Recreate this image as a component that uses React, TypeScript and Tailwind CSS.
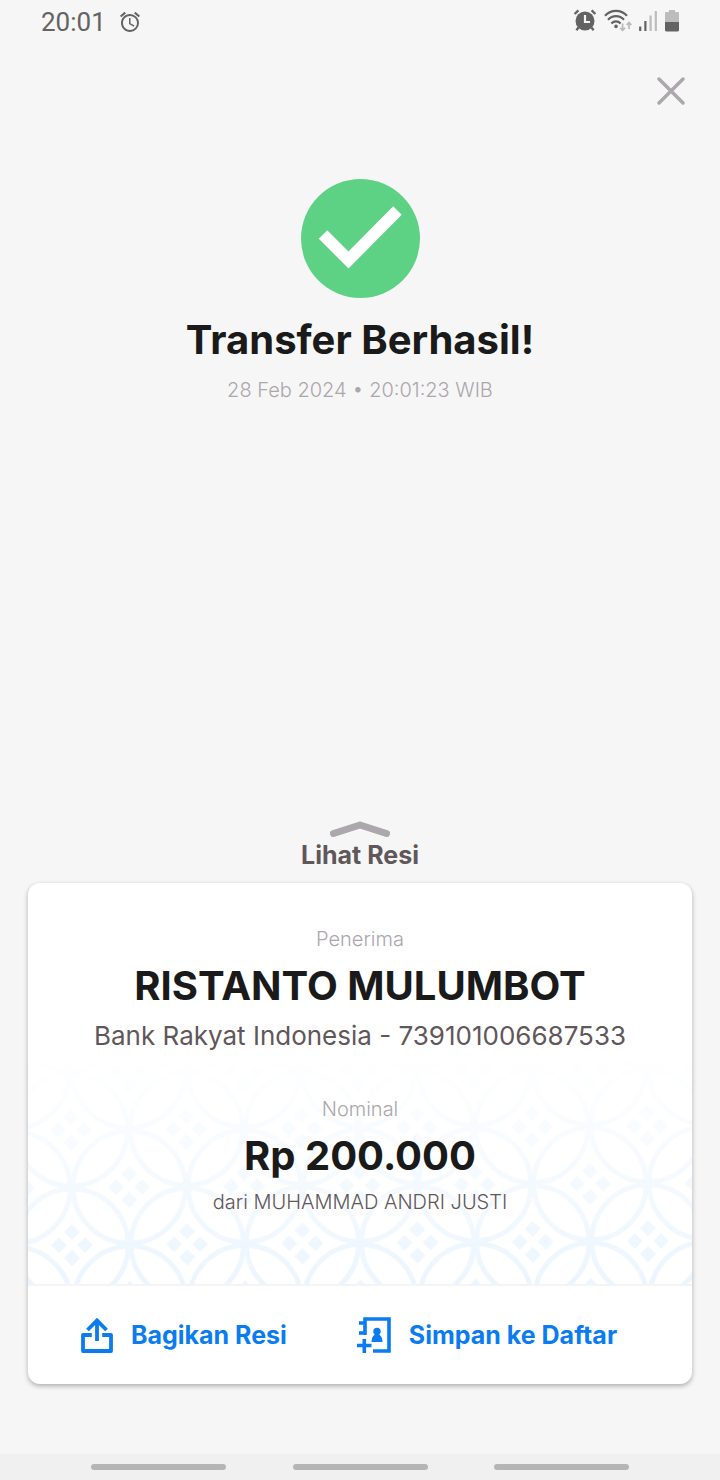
import { MdAccessAlarm } from "react-icons/md";

function AlarmFilledIcon() {
  return (
    <svg viewBox="0 0 24 24" className="size-6" aria-hidden="true">
      <circle cx="12" cy="13" r="9.5" fill="#636363" />
      <path d="M5.5 19.5L3.4 22.2M18.5 19.5L20.6 22.2" stroke="#636363" strokeWidth="2.4" />
      <path d="M1.6 6L5.4 2.4M22.4 6L18.6 2.4" stroke="#636363" strokeWidth="2.4" />
      <path d="M12 7V14H17" fill="none" stroke="#f6f6f6" strokeWidth="2.2" />
    </svg>
  );
}

function WifiIcon() {
  return (
    <svg viewBox="0 0 28 24" className="h-6 w-7" aria-hidden="true">
      <g fill="none" stroke="#636363" strokeWidth="2.2">
        <path d="M1 7.8C7 1.2 17 1.2 23 7.8" />
        <path d="M4 11.8C8.5 7 15.5 7 20 11.8" />
        <path d="M7.4 15.4C10 12.6 14 12.6 16.6 15.4" />
      </g>
      <circle cx="12" cy="18.4" r="1.8" fill="#636363" />
      <g fill="none" stroke="#b9b9b9" strokeWidth="1.7">
        <path d="M18.6 15.5V22M16.2 19.8L18.6 22.3L21 19.8" />
        <path d="M25 21V14.5M22.6 17L25 14.5L27.4 17" />
      </g>
    </svg>
  );
}

function SignalIcon() {
  return (
    <svg viewBox="0 0 20 24" className="h-6 w-5" aria-hidden="true">
      <path d="M2.2 18.5V23M7.4 13V23" stroke="#636363" strokeWidth="2.2" />
      <path d="M12.6 7.5V23M17.8 3V23" stroke="#bcbcbc" strokeWidth="2.2" />
    </svg>
  );
}

function BatteryIcon() {
  return (
    <svg viewBox="0 0 14 24" className="h-6 w-3.5" aria-hidden="true">
      <path d="M4 2H10V4H13Q14 4 14 5V14H0V5Q0 4 1 4H4Z" fill="#bcbcbc" />
      <path d="M0 14H14V22Q14 23.5 12.5 23.5H1.5Q0 23.5 0 22Z" fill="#636363" />
    </svg>
  );
}

function CloseIcon() {
  return (
    <svg viewBox="0 0 28 28" className="size-7" aria-hidden="true">
      <path d="M2 2L26 26M26 2L2 26" stroke="#aca6ad" strokeWidth="3.4" strokeLinecap="round" />
    </svg>
  );
}

function SuccessIcon() {
  return (
    <svg viewBox="0 0 120 120" className="size-30" aria-hidden="true">
      <circle cx="60.5" cy="59.5" r="59.5" fill="#5dd284" />
      <path d="M23 55.5L48.5 81L97.5 31.5" fill="none" stroke="#fff" strokeWidth="12" />
    </svg>
  );
}

function ShareIcon() {
  return (
    <svg viewBox="0 0 32 36" className="h-9 w-8" fill="none" stroke="currentColor" strokeWidth="3.8" aria-hidden="true">
      <path d="M10.8 18H2V34H30V18H21.2" strokeLinejoin="round" />
      <path d="M16 4V24M6.5 13L16 3.5L25.5 13" />
    </svg>
  );
}

function ContactAddIcon() {
  return (
    <svg viewBox="0 0 34 36" className="h-9 w-8.5" fill="none" stroke="currentColor" strokeWidth="3.6" aria-hidden="true">
      <path d="M16 34H32V2H8V18" />
      <path d="M2 6H8M2 16H8" />
      <path d="M0 28.5H14.5M7.3 22V36" />
      <circle cx="20" cy="14.5" r="3.7" fill="currentColor" stroke="none" />
      <path d="M14.5 25C14.5 20 17 17 20 17S25.5 20 25.5 25Z" fill="currentColor" stroke="none" />
    </svg>
  );
}

// Kawung ornament behind the lower half of the receipt, fading out upwards
function KawungPattern() {
  return (
    <svg className="absolute inset-x-0 bottom-0 h-58 w-full" aria-hidden="true">
      <defs>
        <linearGradient id="fade" x1="0" y1="0" x2="0" y2="1">
          <stop offset="0" stopColor="#fff" stopOpacity="0" />
          <stop offset="1" stopColor="#fff" />
        </linearGradient>
        <mask id="fade-mask">
          <rect width="100%" height="100%" fill="url(#fade)" />
        </mask>
        <g id="squares" fill="#ecf5fe">
          <path d="M0 -21L8 -13L0 -5L-8 -13Z" />
          <path d="M0 5L8 13L0 21L-8 13Z" />
          <path d="M-13 -8L-5 0L-13 8L-21 0Z" />
          <path d="M13 -8L21 0L13 8L5 0Z" />
        </g>
        <pattern
          id="kawung"
          width="115.2"
          height="115.2"
          patternUnits="userSpaceOnUse"
          patternTransform="translate(44 193) rotate(-0.4)"
        >
          <g fill="none" stroke="#ecf5fe" strokeWidth="5">
            <circle cx="0" cy="0" r="56.2" />
            <circle cx="115.2" cy="0" r="56.2" />
            <circle cx="0" cy="115.2" r="56.2" />
            <circle cx="115.2" cy="115.2" r="56.2" />
            <circle cx="57.6" cy="57.6" r="56.2" />
          </g>
          <use href="#squares" />
          <use href="#squares" x="115.2" />
          <use href="#squares" y="115.2" />
          <use href="#squares" x="115.2" y="115.2" />
          <use href="#squares" x="57.6" y="57.6" />
        </pattern>
      </defs>
      <rect width="100%" height="100%" fill="url(#kawung)" mask="url(#fade-mask)" />
    </svg>
  );
}

function StatusBar() {
  return (
    <header className="flex h-11 items-center justify-between px-[41px] font-['Roboto',sans-serif] text-[#636363]">
      <div className="flex items-center gap-3">
        <span className="text-[26px] leading-8">20:01</span>
        <MdAccessAlarm className="size-6" aria-hidden="true" />
      </div>
      <div className="flex items-center gap-[7px] pb-1">
        <AlarmFilledIcon />
        <div className="flex items-center gap-1.5">
          <WifiIcon />
          <SignalIcon />
        </div>
        <BatteryIcon />
      </div>
    </header>
  );
}

export default function App() {
  return (
    <div className="flex min-h-screen flex-col bg-[#f6f6f6] font-['Inter',sans-serif] text-[#1a1a1a]">
      <StatusBar />

      <div className="flex justify-end px-[27px] pt-[25px]">
        <button type="button" aria-label="Tutup" className="p-2">
          <CloseIcon />
        </button>
      </div>

      <main className="flex grow flex-col px-7">
        <section className="flex flex-col items-center pt-[66px] text-center">
          <SuccessIcon />
          <h1 className="mt-[17px] text-[40px] leading-12 font-bold">Transfer Berhasil!</h1>
          <p className="mt-3.5 text-[20px] leading-6 font-light text-[#aca6ad]">28 Feb 2024 • 20:01:23 WIB</p>
        </section>

        <button type="button" className="mt-auto flex flex-col items-center gap-0.5 self-center pb-3 text-[#5f5759]">
          <svg viewBox="0 0 60 16" className="h-4 w-15" aria-hidden="true">
            <path
              d="M3.5 12.5L30 4L56.5 12.5"
              fill="none"
              stroke="#aca6ad"
              strokeWidth="7"
              strokeLinecap="round"
              strokeLinejoin="round"
            />
          </svg>
          <span className="text-[25px] leading-8 font-bold">Lihat Resi</span>
        </button>

        <article className="mb-[70px] overflow-hidden rounded-xl bg-white shadow-[0_2px_5px_rgba(0,0,0,0.3)]">
          <div className="relative border-b-2 border-[#f4f4f4]">
            <KawungPattern />
            <div className="relative flex flex-col items-center px-6 pt-11 pb-[70px] text-center">
              <p className="text-[20px] leading-6 font-light text-[#aca6ad]">Penerima</p>
              <h2 className="mt-[11px] text-[40px] leading-12 font-bold">RISTANTO MULUMBOT</h2>
              <p className="mt-2.5 text-[26px] leading-8 text-[#5f5759]">Bank Rakyat Indonesia - 739101006687533</p>
              <p className="mt-[45px] text-[20px] leading-6 font-light text-[#aca6ad]">Nominal</p>
              <p className="mt-[11px] text-[40px] leading-12 font-bold">Rp 200.000</p>
              <p className="mt-2.5 text-[20px] leading-6 font-light text-[#5f5759]">dari MUHAMMAD ANDRI JUSTI</p>
            </div>
          </div>
          <div className="flex justify-center gap-[70px] py-[31px] pr-5.5 text-[25px] leading-8 font-bold text-[#0a7cf0]">
            <button type="button" className="flex items-center gap-4.5">
              <ShareIcon />
              Bagikan Resi
            </button>
            <button type="button" className="flex items-center gap-4.5">
              <ContactAddIcon />
              Simpan ke Daftar
            </button>
          </div>
        </article>
      </main>

      <footer className="flex justify-between bg-[#f0f0f0] px-[91px] py-2.5">
        <span className="h-1.5 w-[135px] rounded-full bg-[#b5b5b5]" />
        <span className="h-1.5 w-[135px] rounded-full bg-[#b5b5b5]" />
        <span className="h-1.5 w-[135px] rounded-full bg-[#b5b5b5]" />
      </footer>
    </div>
  );
}
